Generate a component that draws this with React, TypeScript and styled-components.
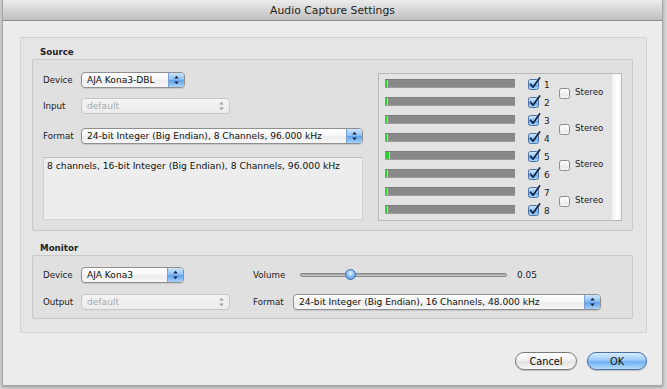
import React from 'react';
import styled, { createGlobalStyle } from 'styled-components';

const Global = createGlobalStyle`
  html, body { margin: 0; padding: 0; background: #d6d6d6; }
  body {
    font-family: "DejaVu Sans", "Liberation Sans", sans-serif;
    font-size: 8.7px;
    color: #1a1a1a;
  }
  #root { width: 667px; height: 389px; overflow: hidden; }
`;

const Window = styled.div`
  margin-left: 2px;
  width: 661px;
  height: 386px;
  box-sizing: border-box;
  border: 1px solid #a8a8a8;
  border-top: none;
  background: #ececec;
  display: flex;
  flex-direction: column;
  box-shadow: 0 1px 3px rgba(0, 0, 0, 0.3);
`;

const TitleBar = styled.div`
  height: 21px;
  box-sizing: border-box;
  border-bottom: 1px solid #8e8e8e;
  background: linear-gradient(#ececec, #d6d6d6 50%, #bfbfbf);
  display: flex;
  align-items: center;
  justify-content: center;
  font-size: 10.8px;
  color: #222;
`;

const Body = styled.div`
  flex: 1;
  display: flex;
  flex-direction: column;
  padding: 16px 15px 0 17px;
`;

const Group = styled.div`
  height: 296px;
  box-sizing: border-box;
  border: 1px solid #d2d2d2;
  border-radius: 2px;
  background: #e5e5e5;
  padding: 0 13px 0 11px;
  display: flex;
  flex-direction: column;
`;

const SectionLabel = styled.div<{ $top: number }>`
  padding: ${(p) => p.$top}px 0 0 8px;
  line-height: 14px;
  font-weight: bold;
  color: #222;
`;

const Inset = styled.div<{ $h: number; $pt: number }>`
  height: ${(p) => p.$h}px;
  box-sizing: border-box;
  border: 1px solid #c9c9c9;
  border-radius: 2px;
  background: #e0e0e0;
  display: flex;
  align-items: flex-start;
  padding: ${(p) => p.$pt}px 10px 0 10px;
`;

const Column = styled.div<{ $w?: number; $ml?: number }>`
  display: flex;
  flex-direction: column;
  width: ${(p) => (p.$w ? `${p.$w}px` : 'auto')};
  margin-left: ${(p) => p.$ml ?? 0}px;
`;

const FieldRow = styled.div<{ $mt?: number }>`
  display: flex;
  align-items: center;
  height: 16px;
  margin-top: ${(p) => p.$mt ?? 0}px;
`;

const FieldLabel = styled.div<{ $w: number }>`
  width: ${(p) => p.$w}px;
  flex: none;
  white-space: nowrap;
`;

const Popup = styled.div<{ $w: number; $disabled?: boolean }>`
  width: ${(p) => p.$w}px;
  height: 16px;
  box-sizing: border-box;
  border: 1px solid ${(p) => (p.$disabled ? '#c6c6c6' : '#8f8f8f')};
  border-radius: 4px;
  background: ${(p) =>
    p.$disabled
      ? 'linear-gradient(#f3f3f3, #ececec)'
      : 'linear-gradient(#ffffff, #f6f6f6 50%, #ececec 51%, #f7f7f7)'};
  color: ${(p) => (p.$disabled ? '#a9a9a9' : '#111')};
  display: flex;
  align-items: center;
  overflow: hidden;
  box-shadow: ${(p) => (p.$disabled ? 'none' : '0 1px 1px rgba(0,0,0,0.12)')};
`;

const PopupText = styled.div`
  flex: 1;
  padding-left: 5px;
  white-space: nowrap;
  overflow: hidden;
  font-size: 9.1px;
`;

const Stepper = styled.div<{ $disabled?: boolean }>`
  width: 15px;
  height: 100%;
  flex: none;
  display: flex;
  align-items: center;
  justify-content: center;
  background: ${(p) =>
    p.$disabled
      ? 'transparent'
      : 'linear-gradient(#cfe6fc, #8cc1f5 45%, #5fa3ec 55%, #a9d3fa)'};
  border-left: 1px solid ${(p) => (p.$disabled ? 'transparent' : '#7aa3d3')};
`;

const TextArea = styled.div`
  margin-top: 13px;
  height: 63px;
  box-sizing: border-box;
  border: 1px solid #d2d2d2;
  border-top-color: #c0c0c0;
  background: #ededed;
  padding: 2px 3px;
  white-space: nowrap;
  font-size: 9.2px;
  color: #111;
`;

const MeterPanel = styled.div`
  margin-left: 15px;
  margin-top: 1px;
  width: 244px;
  height: 148px;
  box-sizing: border-box;
  border: 1px solid #b9b9b9;
  background: #e3e3e3;
  display: grid;
  grid-template-columns: 174px 1fr 9px;
`;

const MeterRows = styled.div`
  display: flex;
  flex-direction: column;
`;

const MeterRow = styled.div`
  height: 18px;
  display: flex;
  align-items: center;
`;

const Bar = styled.div`
  margin-left: 6px;
  width: 130px;
  height: 9px;
  box-sizing: border-box;
  background: #898989;
  border-top: 1px solid #7d7d7d;
  border-bottom: 1px solid #9c9c9c;
  display: flex;
`;

const Level = styled.div`
  height: 100%;
  background: #2fd12f;
  border-right: 1px solid #c9c9c9;
  box-sizing: border-box;
`;

const BoxWrap = styled.div<{ $ml: number }>`
  margin-left: ${(p) => p.$ml}px;
  width: 13px;
  height: 13px;
  flex: none;
  display: flex;
`;

const ChannelNum = styled.div`
  margin-left: 3px;
  margin-top: 3px;
  font-size: 9px;
`;

const StereoCol = styled.div`
  display: flex;
  flex-direction: column;
  padding-left: 6px;
`;

const StereoRow = styled.div`
  height: 36px;
  display: flex;
  align-items: center;
  gap: 3px;
`;

const Strip = styled.div`
  background: linear-gradient(90deg, #f2f2f2, #ffffff 60%, #f4f4f4);
`;

const SliderRow = styled.div`
  display: flex;
  align-items: center;
  height: 16px;
`;

const Track = styled.div`
  position: relative;
  width: 207px;
  height: 4px;
  box-sizing: border-box;
  border: 1px solid #8c8c8c;
  border-radius: 2px;
  background: linear-gradient(#9b9b9b, #d2d2d2);
`;

const Knob = styled.div<{ $pos: number }>`
  position: absolute;
  top: -5px;
  left: ${(p) => p.$pos - 6}px;
  width: 11px;
  height: 11px;
  box-sizing: border-box;
  border-radius: 50%;
  border: 1px solid #3f6fae;
  background: radial-gradient(circle at 50% 35%, #e8f4ff 0%, #8cc2f6 45%, #4b95e6 100%);
`;

const Value = styled.div`
  margin-left: 10px;
  font-size: 9px;
`;

const ButtonRow = styled.div`
  margin-top: 19px;
  display: flex;
  justify-content: flex-end;
  gap: 10px;
`;

const Button = styled.div<{ $w: number; $primary?: boolean }>`
  width: ${(p) => p.$w}px;
  height: 18px;
  box-sizing: border-box;
  border-radius: 9px;
  border: 1px solid ${(p) => (p.$primary ? '#4b6fa6' : '#7a7a7a')};
  background: ${(p) =>
    p.$primary
      ? 'linear-gradient(#d8eefe, #9ccbf8 45%, #6eb1f2 55%, #b5dcfc)'
      : 'linear-gradient(#ffffff, #f1f1f1 45%, #e2e2e2 55%, #f7f7f7)'};
  display: flex;
  align-items: center;
  justify-content: center;
  font-size: 9.8px;
  color: #111;
  box-shadow: 0 1px 1px rgba(0, 0, 0, 0.2);
`;

const Arrows = ({ disabled }: { disabled?: boolean }) => (
  <svg width="7" height="10" viewBox="0 0 7 10">
    <path d="M3.5 0.8 L1.2 3.6 L5.8 3.6 Z M1.2 6.4 L5.8 6.4 L3.5 9.2 Z" fill={disabled ? '#a0a0a0' : '#1a2a3e'} />
  </svg>
);

const SelectBox = ({ w, text, disabled }: { w: number; text: string; disabled?: boolean }) => (
  <Popup $w={w} $disabled={disabled}>
    <PopupText>{text}</PopupText>
    <Stepper $disabled={disabled}>
      <Arrows disabled={disabled} />
    </Stepper>
  </Popup>
);

const CheckBox = ({ checked }: { checked?: boolean }) => (
  <svg width="13" height="13" viewBox="0 0 13 13">
    <defs>
      <linearGradient id="cbOn" x1="0" y1="0" x2="0" y2="1">
        <stop offset="0" stopColor="#d7ecfe" />
        <stop offset="0.5" stopColor="#8ec3f6" />
        <stop offset="0.55" stopColor="#62a7ee" />
        <stop offset="1" stopColor="#b4dcfc" />
      </linearGradient>
      <linearGradient id="cbOff" x1="0" y1="0" x2="0" y2="1">
        <stop offset="0" stopColor="#ffffff" />
        <stop offset="0.5" stopColor="#f2f2f2" />
        <stop offset="0.55" stopColor="#e6e6e6" />
        <stop offset="1" stopColor="#fafafa" />
      </linearGradient>
    </defs>
    <rect
      x="0.5"
      y="2.5"
      width="10"
      height="10"
      rx="2"
      fill={checked ? 'url(#cbOn)' : 'url(#cbOff)'}
      stroke={checked ? '#4c73a8' : '#8d8d8d'}
    />
    {checked && (
      <path
        d="M2.6 7.2 L5 10.2 L11.6 1"
        stroke="#13243f"
        strokeWidth="1.7"
        fill="none"
        strokeLinecap="round"
        strokeLinejoin="round"
      />
    )}
  </svg>
);

const levels = [2, 2, 2, 2, 4, 2, 2, 2];

export default function App() {
  return (
    <>
      <Global />
      <Window>
        <TitleBar>Audio Capture Settings</TitleBar>
        <Body>
          <Group>
            <SectionLabel $top={7}>Source</SectionLabel>
            <Inset $h={172} $pt={12}>
              <Column $w={320}>
                <FieldRow>
                  <FieldLabel $w={38}>Device</FieldLabel>
                  <SelectBox w={104} text="AJA Kona3-DBL" />
                </FieldRow>
                <FieldRow $mt={10}>
                  <FieldLabel $w={38}>Input</FieldLabel>
                  <SelectBox w={149} text="default" disabled />
                </FieldRow>
                <FieldRow $mt={14}>
                  <FieldLabel $w={38}>Format</FieldLabel>
                  <SelectBox w={282} text="24-bit Integer (Big Endian), 8 Channels, 96.000 kHz" />
                </FieldRow>
                <TextArea>8 channels, 16-bit Integer (Big Endian), 8 Channels, 96.000 kHz</TextArea>
              </Column>
              <MeterPanel>
                <MeterRows>
                  {levels.map((lv, i) => (
                    <MeterRow key={i}>
                      <Bar>
                        <Level style={{ width: lv + 1 }} />
                      </Bar>
                      <BoxWrap $ml={13}>
                        <CheckBox checked />
                      </BoxWrap>
                      <ChannelNum>{i + 1}</ChannelNum>
                    </MeterRow>
                  ))}
                </MeterRows>
                <StereoCol>
                  {[0, 1, 2, 3].map((i) => (
                    <StereoRow key={i}>
                      <BoxWrap $ml={0}>
                        <CheckBox />
                      </BoxWrap>
                      <span>Stereo</span>
                    </StereoRow>
                  ))}
                </StereoCol>
                <Strip />
              </MeterPanel>
            </Inset>
            <SectionLabel $top={10}>Monitor</SectionLabel>
            <Inset $h={64} $pt={11}>
              <Column $w={187}>
                <FieldRow>
                  <FieldLabel $w={38}>Device</FieldLabel>
                  <SelectBox w={103} text="AJA Kona3" />
                </FieldRow>
                <FieldRow $mt={11}>
                  <FieldLabel $w={38}>Output</FieldLabel>
                  <SelectBox w={149} text="default" disabled />
                </FieldRow>
              </Column>
              <Column $ml={23}>
                <SliderRow>
                  <FieldLabel $w={47}>Volume</FieldLabel>
                  <Track>
                    <Knob $pos={50} />
                  </Track>
                  <Value>0.05</Value>
                </SliderRow>
                <FieldRow $mt={11}>
                  <FieldLabel $w={40}>Format</FieldLabel>
                  <SelectBox w={308} text="24-bit Integer (Big Endian), 16 Channels, 48.000 kHz" />
                </FieldRow>
              </Column>
            </Inset>
          </Group>
          <ButtonRow>
            <Button $w={62}>Cancel</Button>
            <Button $w={60} $primary>
              OK
            </Button>
          </ButtonRow>
        </Body>
      </Window>
    </>
  );
}
